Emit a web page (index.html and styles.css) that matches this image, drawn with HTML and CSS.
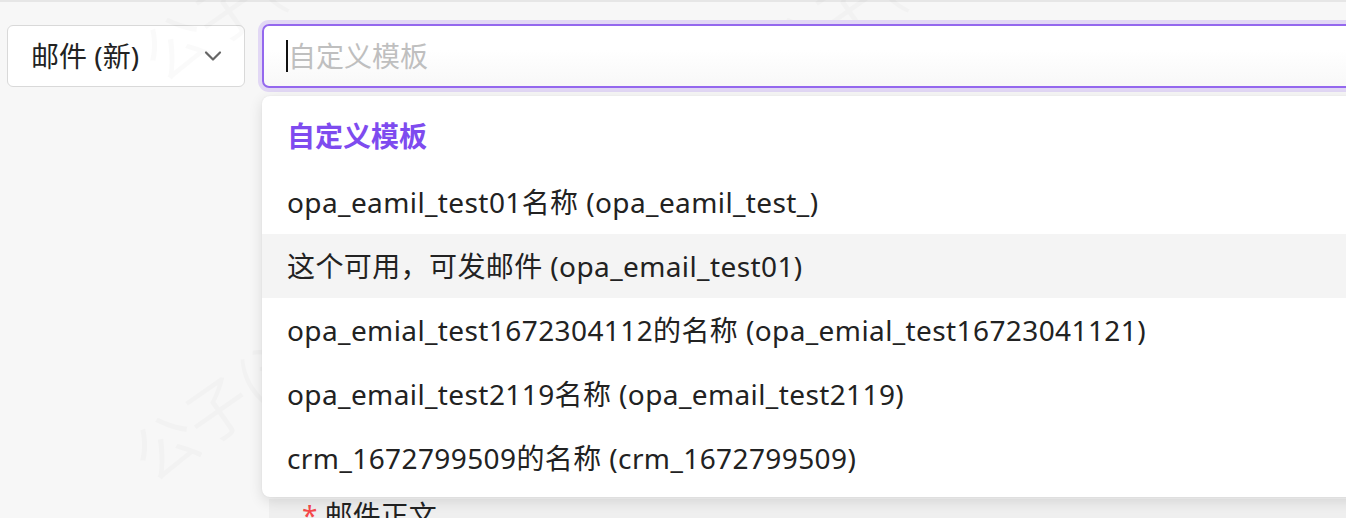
FILE: index.html
```html
<!DOCTYPE html>
<html lang="zh">
<head>
<meta charset="utf-8">
<link rel="stylesheet" href="styles.css">
</head>
<body>
<div class="topline"></div>
<div class="watermark wm1">公子(江苏)</div>
<div class="watermark wm2">公子(江苏)</div>
<div class="watermark wm3">公子(江苏)</div>
<div class="toolbar">
  <div class="select">
    <span class="select-text">邮件 (新)</span>
    <svg class="chev" width="18" height="12" viewBox="0 0 18 12"><path d="M2 2.5 L9 9.5 L16 2.5" fill="none" stroke="#666" stroke-width="2.2" stroke-linecap="round" stroke-linejoin="round"/></svg>
  </div>
  <div class="combo">
    <div class="input"><span class="caret"></span><span class="placeholder">自定义模板</span></div>
    <div class="dropdown">
      <div class="group">自定义模板</div>
      <div class="opt">opa_eamil_test01名称 (opa_eamil_test_)</div>
      <div class="opt active">这个可用，可发邮件 (opa_email_test01)</div>
      <div class="opt">opa_emial_test1672304112的名称 (opa_emial_test16723041121)</div>
      <div class="opt">opa_email_test2119名称 (opa_email_test2119)</div>
      <div class="opt">crm_1672799509的名称 (crm_1672799509)</div>
    </div>
  </div>
</div>
<div class="panel">
  <div class="field-label"><span class="req">*</span> 邮件正文</div>
</div>
</body>
</html>
```
FILE: styles.css
```css
html, body {
  margin: 0;
  padding: 0;
  width: 1346px;
  height: 518px;
  overflow: hidden;
}
body {
  background: #f7f7f7;
  font-family: "Noto Sans", "Noto Sans CJK SC", sans-serif;
  color: #222;
  position: relative;
}
.topline {
  height: 2px;
  background: #e6e6e6;
}
.watermark {
  position: absolute;
  font-family: "Noto Sans CJK SC", sans-serif;
  font-size: 64px;
  color: rgba(0, 0, 0, 0.02);
  transform: rotate(-35deg);
  white-space: nowrap;
  pointer-events: none;
}
.wm1 { left: 110px; top: 330px; }
.wm2 { left: 120px; top: -70px; }
.wm3 { left: 740px; top: -70px; }
.toolbar {
  display: flex;
  align-items: center;
  gap: 17px;
  padding: 22px 0 0 7px;
}
.select {
  box-sizing: border-box;
  width: 238px;
  height: 62px;
  background: #fff;
  border: 1px solid #d9d9d9;
  border-radius: 6px;
  display: flex;
  align-items: center;
  justify-content: space-between;
  padding: 0 22px 0 23px;
  font-size: 28px;
  flex: none;
}
.select-text { line-height: 1; }
.chev { display: block; }
.combo {
  position: relative;
  flex: 1;
  margin-right: -40px;
}
.input {
  box-sizing: border-box;
  height: 64px;
  border: 2px solid #9468ee;
  border-radius: 7px;
  box-shadow: 0 0 0 4px #e2d8f5;
  background: linear-gradient(#ffffff 40%, #f8f8f8);
  display: flex;
  align-items: center;
  padding-left: 22px;
  font-size: 28px;
}
.caret {
  width: 2px;
  height: 32px;
  background: #111;
}
.placeholder {
  color: #bfbfbf;
  line-height: 1;
}
.dropdown {
  position: absolute;
  left: 0;
  right: 0;
  top: calc(100% + 8px);
  background: #fff;
  border-radius: 8px;
  box-shadow: 0 4px 14px rgba(0, 0, 0, 0.12), 0 0 2px rgba(0, 0, 0, 0.06);
  padding: 10px 0 7px;
  z-index: 5;
}
.group, .opt {
  height: 64px;
  display: flex;
  align-items: center;
  padding-left: 25px;
  font-size: 28px;
  line-height: 32px;
  white-space: nowrap;
}
.group {
  color: #7e4bef;
  font-weight: 700;
  padding-bottom: 4px;
  box-sizing: border-box;
}
.opt {
  color: #222;
  letter-spacing: 0.4px;
}
.opt.active { background: #f4f4f4; }
.panel {
  margin: 411px 0 0 269px;
  height: 24px;
  background: #efefef;
  padding-left: 33px;
  overflow: hidden;
}
.field-label {
  font-size: 28px;
  line-height: 32px;
  color: #222;
}
.req { color: #f5484a; }
```
